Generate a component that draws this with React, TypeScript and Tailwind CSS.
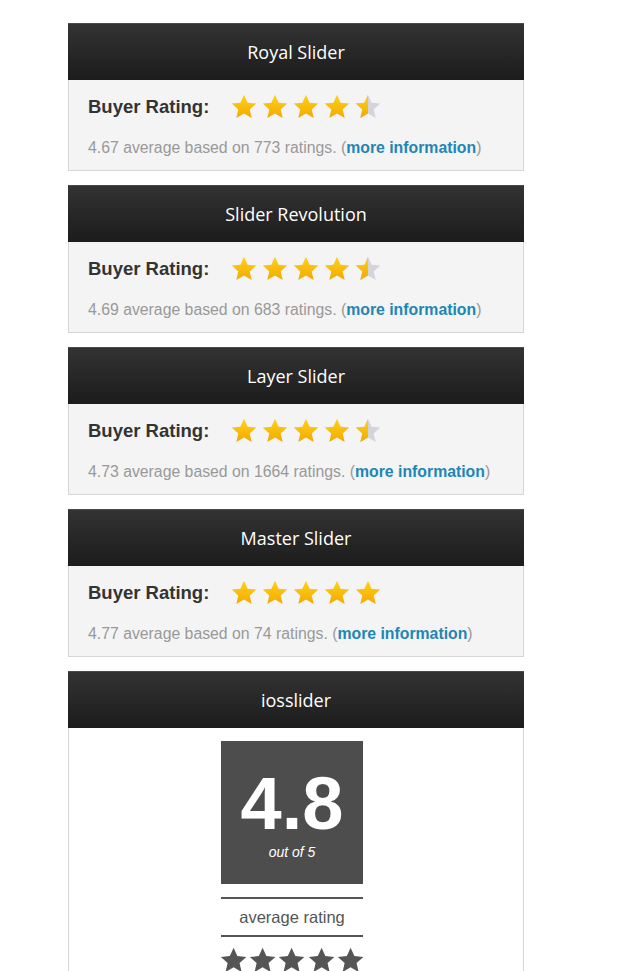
import React from 'react'

const STAR = 'M12 1.5l3.1 6.9 7.4.7-5.6 5 1.7 7.4L12 17.6l-6.6 3.9 1.7-7.4-5.6-5 7.4-.7z'

function Star({ fill, id }: { fill: 'full' | 'half'; id: string }) {
    return (
        <svg width="28" height="28" viewBox="0 0 24 24">
            <defs>
                <linearGradient id={`g-${id}`} x1="0" y1="0" x2="0" y2="1">
                    <stop offset="0" stopColor="#ffd21a" />
                    <stop offset="1" stopColor="#f2a900" />
                </linearGradient>
                <clipPath id={`c-${id}`}>
                    <rect x="0" y="0" width="12" height="24" />
                </clipPath>
            </defs>
            {fill === 'half' && <path d={STAR} fill="#d4d4dc" />}
            <path d={STAR} fill={`url(#g-${id})`} clipPath={fill === 'half' ? `url(#c-${id})` : undefined} />
        </svg>
    )
}

const sliders = [
    { name: 'Royal Slider', avg: '4.67', count: '773', half: true },
    { name: 'Slider Revolution', avg: '4.69', count: '683', half: true },
    { name: 'Layer Slider', avg: '4.73', count: '1664', half: true },
    { name: 'Master Slider', avg: '4.77', count: '74', half: false },
]

function Header({ title }: { title: string }) {
    return (
        <div className="h-[57px] flex items-center justify-center bg-gradient-to-b from-[#333333] to-[#1c1c1c] border-t border-[#4a4a4a] text-white text-[18px] font-['Open_Sans',sans-serif]">
            {title}
        </div>
    )
}

export default function App() {
    return (
        <div className="w-[625px] h-[971px] overflow-hidden bg-white pt-[23px] pl-[68px] font-['Liberation_Sans',Arial,sans-serif]">
            <div className="w-[456px] flex flex-col gap-[14px]">
                {sliders.map((s, i) => (
                    <div key={s.name}>
                        <Header title={s.name} />
                        <div className="bg-[#f4f4f4] border border-t-0 border-[#d6d6d6] pl-[19px] pt-[13px] pb-[13px]">
                            <div className="flex items-center h-[28px]">
                                <span className="w-[142px] text-[18.5px] font-bold text-[#333333]">Buyer Rating:</span>
                                <div className="flex gap-[3px]">
                                    {[0, 1, 2, 3, 4].map(k => (
                                        <Star key={k} id={`${i}-${k}`} fill={s.half && k === 4 ? 'half' : 'full'} />
                                    ))}
                                </div>
                            </div>
                            <p className="mt-[18px] text-[15.8px] leading-[18px] text-[#999999]">
                                {s.avg} average based on {s.count} ratings. (<span className="font-bold text-[#1d86b5]">more information</span>)
                            </p>
                        </div>
                    </div>
                ))}
                <div>
                    <Header title="iosslider" />
                    <div className="bg-white border border-t-0 border-[#d6d6d6] pt-[13px] pl-[152px] h-[260px]">
                        <div className="w-[142px]">
                            <div className="h-[143px] bg-[#4d4d4d] flex flex-col items-center pt-[26px]">
                                <span className="text-[74px] leading-[74px] font-bold text-white">4.8</span>
                                <span className="mt-[1px] text-[14px] italic text-white">out of 5</span>
                            </div>
                            <div className="mt-[13px] border-t-2 border-b-2 border-[#555555] h-[40px] flex items-center justify-center text-[16.5px] text-[#555555]">
                                average rating
                            </div>
                            <div className="flex justify-between mt-[8px] -mx-[2px]">
                                {[0, 1, 2, 3, 4].map(k => (
                                    <svg key={k} width="31" height="31" viewBox="0 0 24 24">
                                        <path d={STAR} fill="#555555" />
                                    </svg>
                                ))}
                            </div>
                        </div>
                    </div>
                </div>
            </div>
        </div>
    )
}
